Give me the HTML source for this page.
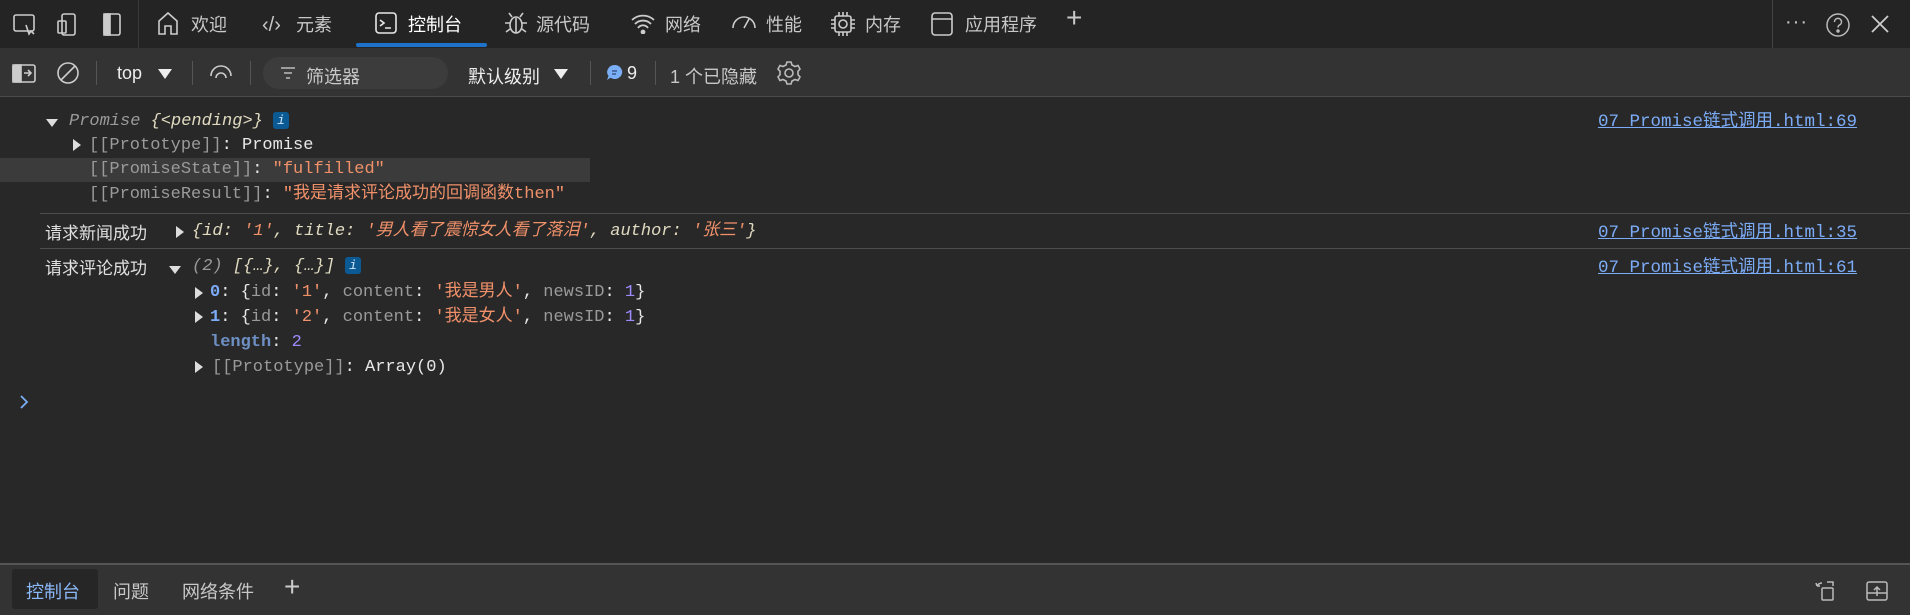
<!DOCTYPE html>
<html><head><meta charset="utf-8"><style>
*{margin:0;padding:0;box-sizing:border-box}
body{width:1910px;height:615px;background:#282828;font-family:"Liberation Sans","Noto Sans CJK SC",sans-serif;color:#d6d6d6;position:relative;overflow:hidden}
.abs{position:absolute}
#top{left:0;top:0;width:1910px;height:48px;background:#242424}
#tb{left:0;top:48px;width:1910px;height:49px;background:#333;border-bottom:1px solid #4a4a4a}
.tab{position:absolute;top:13px;font-size:18px;color:#c8c8c8;line-height:24px}
.ic{position:absolute}
.sep{position:absolute;width:1px;background:#555}
.mono{font-family:"Liberation Mono","Noto Sans CJK SC",monospace;font-size:17px;line-height:25px;white-space:pre;position:absolute}
.g{color:#9a9a9a}.w{color:#e8e8e8}.o{color:#f0916a}.k{color:#e0dac0}.n{color:#9d8cff}.b{color:#7cacf8}
.tri{position:absolute;width:0;height:0}
.tr{border-left:8px solid #ddd;border-top:6px solid transparent;border-bottom:6px solid transparent}
.td{border-top:8px solid #ddd;border-left:6px solid transparent;border-right:6px solid transparent}
.info{display:inline-block;width:16px;height:17px;background:#0b5a94;border-radius:3px;color:#cfe3ff;font-size:13px;text-align:center;line-height:17px;font-style:italic;vertical-align:1px}
.lnk{position:absolute;left:1598px;font-family:"Liberation Mono","Noto Sans CJK SC",monospace;font-size:17.5px;color:#7cacf8;text-decoration:underline;white-space:pre}
.cn{position:absolute;font-size:17px;color:#e0e0e0}
.hr{position:absolute;left:40px;right:0;height:1px;background:#4d4d4d}
.t2{position:absolute;top:63px;font-size:18px}
</style></head><body>
<div id="top" class="abs"></div>
<div id="tb" class="abs"></div>

<svg class="ic" style="left:12px;top:12px" width="120" height="26" fill="none" stroke="#ccc" stroke-width="1.6">
<rect x="2" y="3" width="20" height="16" rx="2"/><path d="M14 13l3 9 2-3 3 3"/>
<rect x="50" y="2" width="13" height="21" rx="2"/><rect x="46" y="9" width="8" height="12" rx="1"/>
<rect x="92" y="2" width="16" height="21" rx="2"/><rect x="92" y="2" width="6" height="21" fill="#ccc"/>
</svg>
<div class="sep" style="left:138px;top:0;height:48px;background:#3a3a3a"></div>
<svg class="ic" style="left:156px;top:10px" width="24" height="26" fill="none" stroke="#ccc" stroke-width="1.6"><path d="M3 24V11L12 3l9 8v13h-6v-8h-6v8z"/></svg>
<div class="tab" style="left:191px">欢迎</div>
<div class="tab" style="left:262px;font-size:20px">‹/›</div>
<div class="tab" style="left:296px">元素</div>
<svg class="ic" style="left:374px;top:11px" width="24" height="24" fill="none" stroke="#e8e8e8" stroke-width="1.6"><rect x="2" y="2" width="20" height="20" rx="3"/><path d="M6 9l4 3-4 3M11 17h6"/></svg>
<div class="tab" style="left:408px;color:#fff">控制台</div>
<div class="abs" style="left:356px;top:43px;width:131px;height:4px;background:#1e72c8;border-radius:2px"></div>
<svg class="ic" style="left:503px;top:10px" width="26" height="26" fill="none" stroke="#ccc" stroke-width="1.6"><ellipse cx="13" cy="15" rx="6" ry="8"/><path d="M9 7l-3-4M17 7l3-4M7 13H2M19 13h5M7 19l-4 3M19 19l4 3M13 8v15"/></svg>
<div class="tab" style="left:536px">源代码</div>
<svg class="ic" style="left:630px;top:12px" width="26" height="22" fill="none" stroke="#ccc" stroke-width="1.8"><path d="M2 8a16 16 0 0 1 22 0M5 12a11 11 0 0 1 16 0M8 16a6 6 0 0 1 10 0"/><circle cx="13" cy="20" r="1.5" fill="#ccc"/></svg>
<div class="tab" style="left:665px">网络</div>
<svg class="ic" style="left:730px;top:12px" width="28" height="22" fill="none" stroke="#ccc" stroke-width="1.6"><path d="M3 16a11 11 0 0 1 22 0M14 16l5-9"/></svg>
<div class="tab" style="left:766px">性能</div>
<svg class="ic" style="left:830px;top:11px" width="26" height="26" fill="none" stroke="#ccc" stroke-width="1.6"><rect x="5" y="5" width="16" height="16" rx="2"/><circle cx="13" cy="13" r="4"/><path d="M9 1v4M13 1v4M17 1v4M9 21v4M13 21v4M17 21v4M1 9h4M1 13h4M1 17h4M21 9h4M21 13h4M21 17h4"/></svg>
<div class="tab" style="left:865px">内存</div>
<svg class="ic" style="left:930px;top:11px" width="24" height="26" fill="none" stroke="#ccc" stroke-width="1.6"><rect x="2" y="2" width="20" height="22" rx="3"/><path d="M2 8h20"/></svg>
<div class="tab" style="left:965px">应用程序</div>
<div class="tab" style="left:1066px;font-size:28px;top:6px;font-weight:300">+</div>
<div class="sep" style="left:1772px;top:0;height:48px;background:#444"></div>
<div class="tab" style="left:1785px;top:10px;font-size:20px;letter-spacing:1px">···</div>
<svg class="ic" style="left:1825px;top:12px" width="26" height="26" fill="none" stroke="#bbb" stroke-width="1.5"><circle cx="13" cy="13" r="11"/><path d="M9.5 10a3.5 3.5 0 1 1 5 3c-1 .6-1.5 1.2-1.5 2.5"/><circle cx="13" cy="19" r="1" fill="#bbb"/></svg>
<svg class="ic" style="left:1870px;top:14px" width="20" height="20" stroke="#ccc" stroke-width="1.8"><path d="M2 2l16 16M18 2L2 18"/></svg>

<svg class="ic" style="left:12px;top:62px" width="80" height="24" fill="none" stroke="#ccc" stroke-width="1.6">
<rect x="1" y="3" width="22" height="17" rx="2"/><path d="M1 3h8v17H1z" fill="#ccc"/><path d="M12 11h7M16 8l3 3-3 3"/>
<circle cx="56" cy="11" r="10"/><path d="M49 18l14-14"/></svg>
<div class="sep" style="left:96px;top:61px;height:24px"></div>
<div class="t2" style="left:117px;color:#eee">top</div>
<div class="tri td" style="left:158px;top:69px;border-top-color:#eee;border-top-width:10px;border-left-width:7px;border-right-width:7px"></div>
<div class="sep" style="left:192px;top:61px;height:24px"></div>
<svg class="ic" style="left:209px;top:62px" width="24" height="22" fill="none" stroke="#ccc" stroke-width="1.6"><path d="M2 14a10 10 0 0 1 20 0"/><path d="M7 16a5 5 0 0 1 10 0"/></svg>
<div class="sep" style="left:250px;top:61px;height:24px"></div>
<div class="abs" style="left:263px;top:57px;width:185px;height:32px;border-radius:16px;background:#3c3c3c"></div>
<svg class="ic" style="left:280px;top:66px" width="16" height="14" stroke="#bbb" stroke-width="1.6"><path d="M1 2h14M4 7h8M6 12h4"/></svg>
<div class="t2" style="left:306px;color:#c8c8c8">筛选器</div>
<div class="t2" style="left:468px;color:#eee">默认级别</div>
<div class="tri td" style="left:554px;top:69px;border-top-color:#eee;border-top-width:10px;border-left-width:7px;border-right-width:7px"></div>
<div class="sep" style="left:590px;top:61px;height:24px"></div>
<svg class="ic" style="left:606px;top:64px" width="17" height="18"><path d="M8.5 1a7.5 7 0 1 1-4 12.8L1 16l1.5-4A7.5 7 0 0 1 8.5 1z" fill="#7aaef5"/><path d="M6 7h5M6 10h4" stroke="#2a4a7a" stroke-width="1.3"/></svg>
<div class="t2" style="left:627px;color:#eee">9</div>
<div class="sep" style="left:655px;top:61px;height:24px"></div>
<div class="t2" style="left:670px;color:#c8c8c8">1 个已隐藏</div>
<svg class="ic" style="left:776px;top:60px" width="26" height="26" fill="none" stroke="#bbb" stroke-width="1.6"><path d="M11 2h4l1 3 3 1.5 3-1 2 3.5-2 2.3v3.4l2 2.3-2 3.5-3-1L16 21l-1 3h-4l-1-3-3-1.5-3 1-2-3.5 2-2.3v-3.4L2 9l2-3.5 3 1L10 5z"/><circle cx="13" cy="13" r="4"/></svg>

<div class="abs" style="left:0;top:158px;width:590px;height:24px;background:#3b3b3b"></div>
<div class="tri td" style="left:46px;top:119px;border-top-color:#ddd"></div>
<div class="mono" style="left:69px;top:109px;font-style:italic"><span class="g">Promise </span><span class="k">{&lt;pending&gt;}</span> <span class="info">i</span></div>
<div class="tri tr" style="left:73px;top:139px"></div>
<div class="mono" style="left:89px;top:133px"><span class="g">[[Prototype]]</span><span class="w">: Promise</span></div>
<div class="mono" style="left:89px;top:157px"><span class="g">[[PromiseState]]</span><span class="w">: </span><span class="o">"fulfilled"</span></div>
<div class="mono" style="left:89px;top:182px"><span class="g">[[PromiseResult]]</span><span class="w">: </span><span class="o">"我是请求评论成功的回调函数then"</span></div>
<div class="lnk" style="top:107px">07_Promise链式调用.html:69</div>
<div class="hr" style="top:213px"></div>
<div class="cn" style="left:45px;top:219px">请求新闻成功</div>
<div class="tri tr" style="left:176px;top:226px"></div>
<div class="mono" style="left:192px;top:219px;font-style:italic"><span class="k">{id: </span><span class="o">'1'</span><span class="k">, title: </span><span class="o">'男人看了震惊女人看了落泪'</span><span class="k">, author: </span><span class="o">'张三'</span><span class="k">}</span></div>
<div class="lnk" style="top:218px">07_Promise链式调用.html:35</div>
<div class="hr" style="top:248px"></div>
<div class="cn" style="left:45px;top:254px">请求评论成功</div>
<div class="tri td" style="left:169px;top:266px"></div>
<div class="mono" style="left:192px;top:254px;font-style:italic"><span class="g">(2) </span><span class="k">[{…}, {…}]</span> <span class="info">i</span></div>
<div class="lnk" style="top:253px">07_Promise链式调用.html:61</div>
<div class="tri tr" style="left:195px;top:287px"></div>
<div class="mono" style="left:210px;top:280px"><span class="b" style="font-weight:bold">0</span><span class="w">: {</span><span class="g">id</span><span class="w">: </span><span class="o">'1'</span><span class="w">, </span><span class="g">content</span><span class="w">: </span><span class="o">'我是男人'</span><span class="w">, </span><span class="g">newsID</span><span class="w">: </span><span class="n">1</span><span class="w">}</span></div>
<div class="tri tr" style="left:195px;top:311px"></div>
<div class="mono" style="left:210px;top:305px"><span class="b" style="font-weight:bold">1</span><span class="w">: {</span><span class="g">id</span><span class="w">: </span><span class="o">'2'</span><span class="w">, </span><span class="g">content</span><span class="w">: </span><span class="o">'我是女人'</span><span class="w">, </span><span class="g">newsID</span><span class="w">: </span><span class="n">1</span><span class="w">}</span></div>
<div class="mono" style="left:210px;top:330px"><span style="color:#6e8fc4;font-weight:bold">length</span><span class="w">: </span><span class="n">2</span></div>
<div class="tri tr" style="left:195px;top:361px"></div>
<div class="mono" style="left:212px;top:355px"><span class="g">[[Prototype]]</span><span class="w">: Array(0)</span></div>
<svg class="ic" style="left:18px;top:394px" width="12" height="16" fill="none" stroke="#7aaef5" stroke-width="1.8"><path d="M3 2l6 6-6 6"/></svg>

<div class="abs" style="left:0;top:563px;width:1910px;height:52px;background:#333;border-top:2px solid #555"></div>
<div class="abs" style="left:12px;top:569px;width:86px;height:40px;background:#262626;border-radius:3px"></div>
<div class="abs" style="left:26px;top:578px;font-size:18px;color:#8ab8f8">控制台</div>
<div class="abs" style="left:113px;top:578px;font-size:18px;color:#c8c8c8">问题</div>
<div class="abs" style="left:182px;top:578px;font-size:18px;color:#c8c8c8">网络条件</div>
<div class="abs" style="left:284px;top:571px;font-size:28px;color:#ccc;font-weight:300">+</div>
<svg class="ic" style="left:1814px;top:580px" width="80" height="24" fill="none" stroke="#bbb" stroke-width="1.5">
<rect x="8" y="8" width="11" height="12" rx="1"/><path d="M3 6a6 6 0 0 1 5-3M3 6l-1-3M3 6h3M13 2h6v4"/>
<rect x="53" y="2" width="20" height="18" rx="2"/><path d="M53 13h20M63 16V7M60 10l3-3 3 3"/></svg>
</body></html>
